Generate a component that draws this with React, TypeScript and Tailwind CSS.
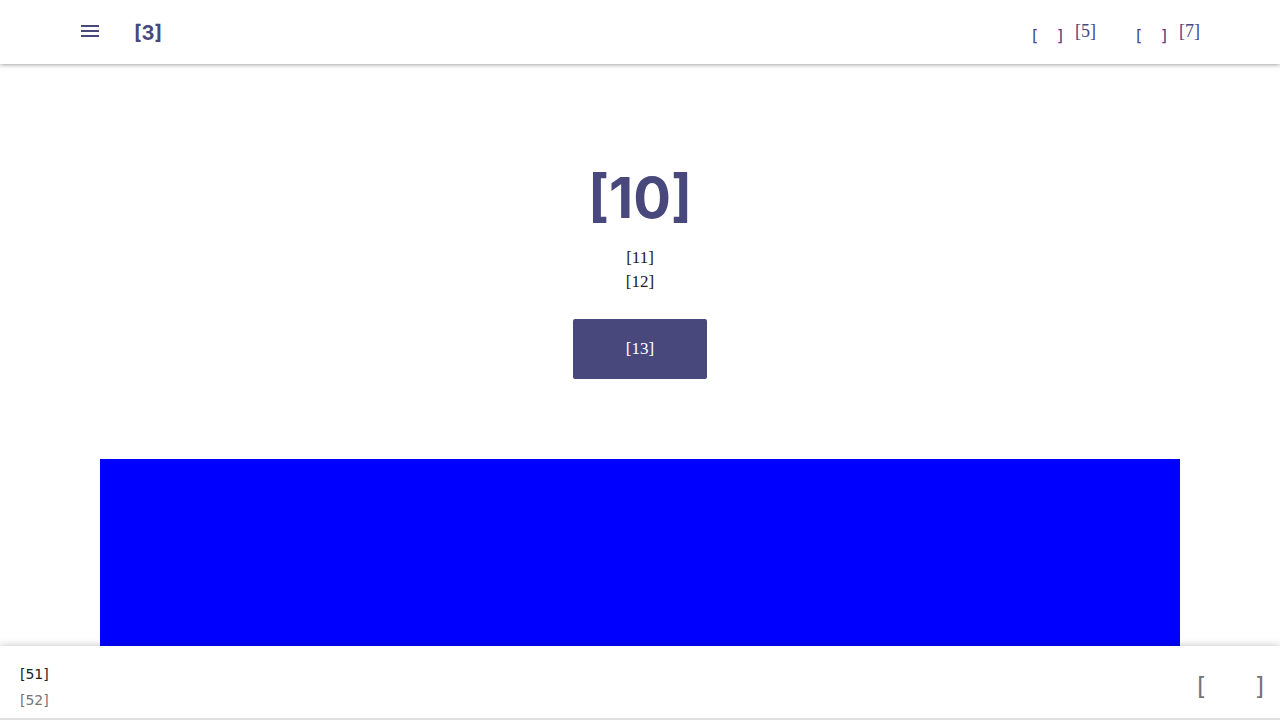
const serif = 'font-["Liberation_Serif",serif]';

function GlyphSlot() {
  return (
    <span aria-hidden="true" className='flex w-[31px] justify-between pt-2.5 font-["DejaVu_Sans",sans-serif] text-base leading-6'>
      <span>[</span>
      <span>]</span>
    </span>
  );
}

function NavLink({ label }: { label: string }) {
  return (
    <a href="#" className="flex items-center gap-3">
      <GlyphSlot />
      <span className={`${serif} text-lg leading-6`}>{label}</span>
    </a>
  );
}

export default function App() {
  return (
    <div className="flex h-screen flex-col overflow-hidden bg-white text-[#212121]">
      <header className="relative z-10 flex h-16 shrink-0 items-center justify-between bg-white px-20 text-[#49487c] shadow-[0_0_5px_rgba(0,0,0,0.5)]">
        <div className="flex items-center gap-8">
          <button type="button" aria-label="Menu" className="pb-0.5">
            <svg width="22" height="24" viewBox="1 0 22 24" fill="currentColor" className="block">
              <path d="M2 6h18v2H2zM2 11h18v2H2zM2 16h18v2H2z" />
            </svg>
          </button>
          <a href="#" className='pt-0.5 font-["Inter",sans-serif] text-xl font-bold leading-6'>[3]</a>
        </div>
        <nav className="flex items-center gap-10 pb-0.5">
          <NavLink label="[5]" />
          <NavLink label="[7]" />
        </nav>
      </header>

      <main className="flex min-h-0 flex-1 flex-col items-center px-[100px] pt-[98px]">
        <h1 className='font-["Inter",sans-serif] text-[56px] font-bold leading-[72px] text-[#49487c]'>[10]</h1>
        <p className={`${serif} mt-3 text-center text-[17px] leading-6`}>
          [11]
          <br />
          [12]
        </p>
        <button type="button" className={`${serif} mt-[25px] h-15 w-[134px] shrink-0 rounded-xs bg-[#49487c] text-[17px] text-white`}>
          [13]
        </button>
        <div className="mt-20 w-full flex-1 bg-[#0000ff]" />
      </main>

      <footer className='relative z-10 flex shrink-0 items-center justify-between border-b-2 border-[#e0e0e0] bg-white pb-2.5 pl-5 pr-4 pt-4 font-["DejaVu_Sans",sans-serif] shadow-[0_0_8px_rgba(0,0,0,0.25)]'>
        <div className="flex flex-col gap-2.5 pt-1 text-sm leading-4">
          <span>[51]</span>
          <span className="text-[#757575]">[52]</span>
        </div>
        <button type="button" aria-label="Close" className="flex w-[67px] justify-between pt-1 text-2xl leading-6 text-[#757575]">
          <span>[</span>
          <span>]</span>
        </button>
      </footer>
    </div>
  );
}
